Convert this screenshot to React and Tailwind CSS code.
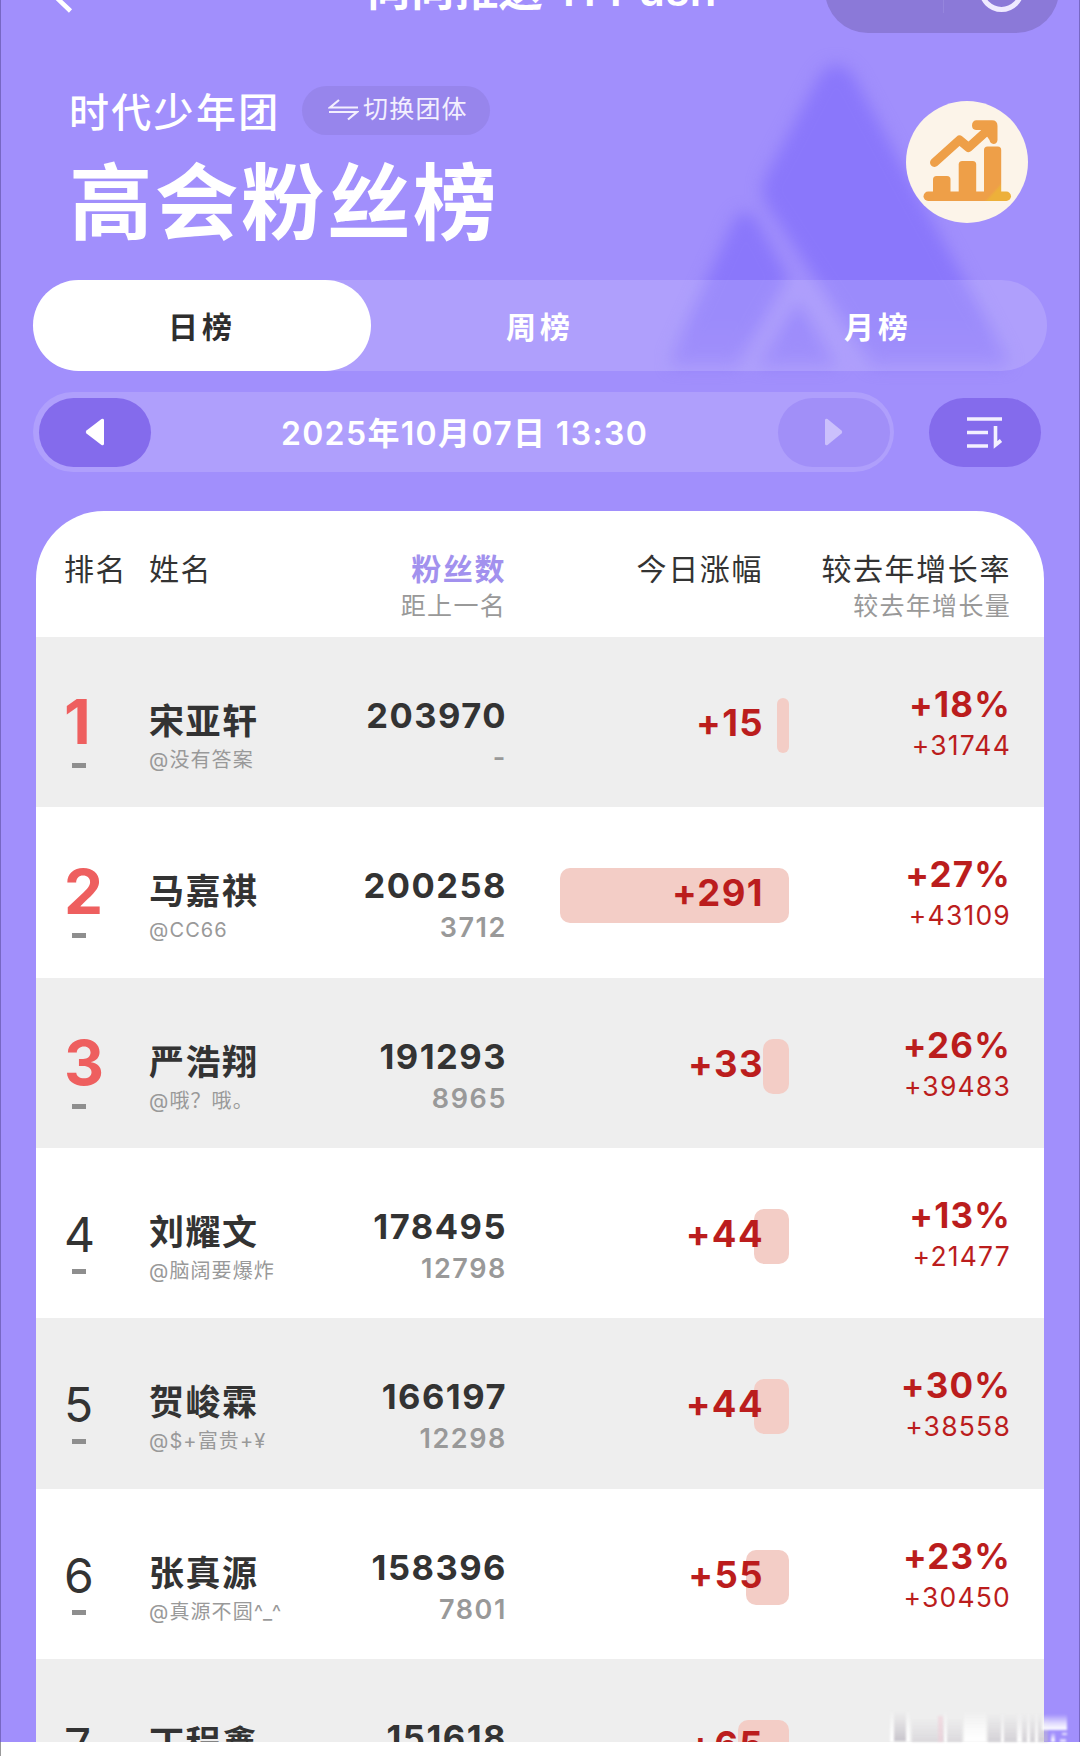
import { useState } from "react";

const TABS = ["日榜", "周榜", "月榜"];

const MEMBERS = [
  { name: "宋亚轩", handle: "@没有答案", fans: 203970, gap: "-", today: 15, rate: 18, growth: 31744 },
  { name: "马嘉祺", handle: "@CC66", fans: 200258, gap: 3712, today: 291, rate: 27, growth: 43109 },
  { name: "严浩翔", handle: "@哦？哦。", fans: 191293, gap: 8965, today: 33, rate: 26, growth: 39483 },
  { name: "刘耀文", handle: "@脑阔要爆炸", fans: 178495, gap: 12798, today: 44, rate: 13, growth: 21477 },
  { name: "贺峻霖", handle: "@$+富贵+¥", fans: 166197, gap: 12298, today: 44, rate: 30, growth: 38558 },
  { name: "张真源", handle: "@真源不圆^_^", fans: 158396, gap: 7801, today: 55, rate: 23, growth: 30450 },
  { name: "丁程鑫", fans: 151618, today: 65 },
];

const MAX_BAR = 229;

function NavBar() {
  return (
    <div className="relative h-[33px] overflow-hidden">
      <svg className="absolute left-[46px] top-0" width="30" height="16" fill="none" stroke="#fff" strokeWidth="4.5">
        <path d="M24 -31L2.500 -10L24.500 11" />
      </svg>
      <p className="absolute left-[367px] top-[-40px] whitespace-pre text-[43.500px] leading-[60px] font-semibold tracking-[0.500px] text-white">
        向向推送 TFPush
      </p>
      <div className="absolute left-[825px] top-[-53px] h-[86px] w-[234px] rounded-full bg-[#8b79d8]">
        <div className="absolute left-[118px] top-[20px] h-[46px] w-px bg-[#9585dd]" />
        <div className="absolute left-[154px] top-[20px] h-[45px] w-[45px] rounded-full border-[5px] border-[#efeaff]" />
      </div>
    </div>
  );
}

function Mountains() {
  return (
    <svg className="absolute left-[620px] top-[40px] blur-[8px]" width="440" height="350" viewBox="620 40 440 350">
      <defs>
        <linearGradient id="hill" x1="0" y1="60" x2="0" y2="385" gradientUnits="userSpaceOnUse">
          <stop offset="0" stopColor="#8a77fb" />
          <stop offset="0.8" stopColor="#8a77fb" />
          <stop offset="1" stopColor="#9480fb" />
        </linearGradient>
      </defs>
      <g fill="url(#hill)">
        <path d="M835 65Q847 65 856 82L1006 358Q1008 366 1000 366H872L764 202Q759 190 764 178L815 82Q824 65 835 65Z" />
        <path d="M744 212Q750 212 757 222L787 278L736 366H674Q668 364 671 356L732 222Q738 212 744 212Z" />
        <path d="M797 302L836 366H757Z" />
      </g>
    </svg>
  );
}

function ChartBadge() {
  return (
    <svg width="122" height="122" viewBox="0 0 122 122">
      <defs>
        <linearGradient id="gold" x1="78" y1="80" x2="100" y2="100" gradientUnits="userSpaceOnUse">
          <stop offset="0.450" stopColor="#ee9f48" />
          <stop offset="0.550" stopColor="#edb03a" />
        </linearGradient>
      </defs>
      <circle cx="61" cy="61" r="61" fill="#fcf4e9" />
      <g fill="#ee9f48">
        <rect x="27" y="75" width="17.500" height="22" rx="3.500" />
        <rect x="52.700" y="60" width="17.500" height="36" rx="3.500" />
        <rect x="78" y="45.500" width="17.200" height="50" rx="3.500" fill="url(#gold)" />
        <rect x="17.500" y="90.500" width="87.500" height="9.500" rx="4.700" fill="url(#gold)" />
        <path d="M70 19.300H86Q91.500 19.300 91.500 25V39Q91 43 87.500 43Q84 42.500 83.500 39L80 34L75 29H70Q66 28.500 66 24.500Q66 20 70 19.300Z" />
      </g>
      <path
        d="M28.500 61.500L53.500 39L62.500 46.500L83 28"
        fill="none"
        stroke="#ee9f48"
        strokeWidth="9"
        strokeLinecap="round"
        strokeLinejoin="round"
      />
    </svg>
  );
}

function Header() {
  return (
    <div className="flex h-[247px] items-start justify-between pl-[69px] pr-[52px]">
      <div>
        <div className="mt-[52px] flex h-[50px] items-center">
          <h2 className="mt-[6px] w-[233px] whitespace-nowrap text-[40px] font-medium leading-[50px] tracking-[2.300px] text-white">
            时代少年团
          </h2>
          <button className="flex h-[49px] w-[188px] items-center rounded-full bg-[#9785ec] pl-[26px] text-[25px] tracking-[1.200px] text-[#f3effe]">
            <svg width="31" height="22" fill="none" stroke="currentColor" strokeWidth="2.200">
              <path d="M11 1L2 8.500H30M1 13H29L20 20.500" />
            </svg>
            <span className="ml-1 whitespace-nowrap">切换团体</span>
          </button>
        </div>
        <h1 className="mt-[18px] whitespace-nowrap text-[83.500px] font-bold leading-[100px] tracking-[2.500px] text-white">
          高会粉丝榜
        </h1>
      </div>
      <div className="mt-[68px]">
        <ChartBadge />
      </div>
    </div>
  );
}

function TabBar({ active, onChange }) {
  return (
    <div className="ml-[33px] flex h-[91px] w-[1014px] rounded-full bg-white/15">
      {TABS.map((tab, i) => (
        <button
          key={tab}
          onClick={() => onChange(i)}
          className={`flex-1 rounded-full pt-[3px] text-[30px] font-bold tracking-[4px] ${
            active === i ? "bg-white text-[#2e2e2e]" : "text-white"
          }`}
        >
          {tab}
        </button>
      ))}
    </div>
  );
}

function DateBar() {
  return (
    <div className="mt-[21px] flex items-center pl-[33px]">
      <div className="flex h-[80px] w-[861px] items-center justify-between rounded-full bg-white/15 pl-[6px] pr-[4px]">
        <button className="flex h-[69px] w-[112px] items-center justify-center rounded-full bg-[#846bec]">
          <svg width="20" height="28" fill="#fff">
            <path d="M19 2V26Q18.500 28 16.500 27L1.500 15.500Q0 14 1.500 12.500L16.500 1Q18.500 0 19 2Z" />
          </svg>
        </button>
        <p className="mt-[3px] whitespace-nowrap text-[32px] font-semibold tracking-[1.350px] text-white">
          2025年10月07日 13:30
        </p>
        <button className="flex h-[69px] w-[112px] items-center justify-center rounded-full bg-[#a18ff8]">
          <svg width="20" height="28" fill="#cbc0fc">
            <path d="M1 2V26Q1.500 28 3.500 27L17.500 15.500Q19 14 17.500 12.500L3.500 1Q1.500 0 1 2Z" />
          </svg>
        </button>
      </div>
      <button className="ml-[35px] flex h-[69px] w-[112px] items-center justify-center rounded-full bg-[#846bec]">
        <svg width="36" height="34" fill="none" stroke="#f3f0ff" strokeWidth="3.6">
          <path d="M0 4H35M0 17.500H21M0 31H21M28.500 11V30L34 25.500" />
        </svg>
      </button>
    </div>
  );
}

function TableHead() {
  return (
    <div className="flex h-[126px] pl-[28px] pr-[33px] pt-[37px] text-[30px] leading-[42px] tracking-[1.600px] text-[#333]">
      <p className="w-[85px] whitespace-nowrap">排名</p>
      <p className="w-[120px]">姓名</p>
      <div className="w-[237px] text-right">
        <p className="font-bold text-[#a291ee]">粉丝数</p>
        <p className="text-[25px] leading-[33px] tracking-[1.300px] text-[#999]">距上一名</p>
      </div>
      <p className="w-[257px] text-right">今日涨幅</p>
      <div className="flex-1 whitespace-nowrap text-right">
        <p>较去年增长率</p>
        <p className="text-[25px] leading-[33px] tracking-[1.300px] text-[#999]">较去年增长量</p>
      </div>
    </div>
  );
}

function MemberRow({ member, rank }) {
  const barWidth = Math.round((member.today / 291) * MAX_BAR);
  const isTop = rank <= 3;

  return (
    <div className="flex h-[170.330px] shrink-0 pl-[28px] pr-[33px] odd:bg-white even:bg-[#eeeeee]">
      <div className="w-[85px]">
        {isTop ? (
          <p className="mt-[55px] text-[62px] font-bold leading-[60px] text-[#ee5f5f]">{rank}</p>
        ) : (
          <p className="mt-[57px] text-[48px] leading-[60px] text-[#333]">{rank}</p>
        )}
        <div className={`ml-[8px] h-[5px] w-[14px] bg-[#8e8e8e] ${isTop ? "mt-[11px]" : "mt-[4px]"}`} />
      </div>
      <div className="w-[130px] whitespace-nowrap pt-[62px]">
        <p className="text-[35px] font-bold leading-[44px] tracking-[1.500px] text-[#333]">{member.name}</p>
        <p className="mt-[2px] text-[20px] leading-[30px] tracking-[1.100px] text-[#999]">{member.handle}</p>
      </div>
      <div className="w-[228px] pt-[58px] text-right">
        <p className="text-[34.500px] font-bold leading-[42px] tracking-[1.500px] text-[#333]">{member.fans}</p>
        <p className="text-[27px] font-semibold leading-[41px] tracking-[1.600px] text-[#999]">{member.gap}</p>
      </div>
      {/* bar sits behind the number, both end near the same edge */}
      <div className="relative mt-[61px] h-[55px] w-[282px]">
        <div className="absolute right-0 top-0 h-full rounded-[10px] bg-[#f3cdc6]" style={{ width: barWidth }} />
        <p className="relative pr-[25px] text-right text-[36.500px] font-bold leading-[51px] tracking-[1.400px] text-[#bb1d1d]">
          +{member.today}
        </p>
      </div>
      {member.rate && (
        <div className="flex-1 pt-[46px] text-right text-[#bb1d1d]">
          <p className="text-[35px] font-bold leading-[42px] tracking-[1.200px]">+{member.rate}%</p>
          <p className="text-[26.500px] leading-[41px] tracking-[1.200px]">+{member.growth}</p>
        </div>
      )}
    </div>
  );
}

function SmearedMark() {
  return (
    <svg className="absolute left-[886px] top-[1706px] blur-[0.8px]" width="182" height="40">
      <defs>
        <linearGradient id="fade" x1="0" y1="0" x2="0" y2="1">
          <stop offset="0" stopColor="#fff" stopOpacity="0" />
          <stop offset="0.600" stopColor="#fff" stopOpacity="0.700" />
          <stop offset="1" stopColor="#fff" />
        </linearGradient>
        <linearGradient id="dusk" x1="0" y1="0" x2="0" y2="1">
          <stop offset="0" stopColor="#c9c4cc" stopOpacity="0" />
          <stop offset="1" stopColor="#c4c0c8" stopOpacity="0.900" />
        </linearGradient>
      </defs>
      <g fill="url(#dusk)">
        <rect x="8" y="6" width="12" height="29" />
        <rect x="26" y="12" width="50" height="24" opacity="0.500" />
        <rect x="102" y="8" width="60" height="28" opacity="0.700" />
      </g>
      <rect x="52" y="10" width="5" height="26" fill="#f0cfd8" opacity="0.600" />
      <g fill="url(#fade)">
        <rect x="4" y="4" width="4" height="32" />
        <rect x="20" y="4" width="4" height="32" />
        <rect x="58" y="4" width="3" height="32" />
        <rect x="78" y="4" width="22" height="32" />
        <rect x="115" y="6" width="3" height="30" />
        <rect x="131" y="6" width="5" height="30" />
        <rect x="141" y="6" width="3" height="30" />
        <rect x="149" y="6" width="3" height="30" />
        <rect x="156" y="8" width="25" height="16" />
        <rect x="165" y="26" width="4" height="10" />
        <rect x="176" y="26" width="5" height="3" />
        <rect x="174" y="32" width="6" height="4" />
      </g>
    </svg>
  );
}

export default function App() {
  const [activeTab, setActiveTab] = useState(0);

  return (
    <div className="relative h-[1756px] w-[1080px] overflow-hidden bg-white font-['Inter','Noto_Sans_CJK_SC',sans-serif]">
      <div className="relative h-[1742px] overflow-hidden border-x border-[#7767c4] bg-[#a18ffc]">
        <div className="-mx-px">
          <Mountains />
          <div className="relative">
            <NavBar />
            <Header />
            <TabBar active={activeTab} onChange={setActiveTab} />
            <DateBar />
            <div className="ml-[36px] mt-[39px] w-[1008px] overflow-hidden rounded-t-[68px] bg-white">
              <TableHead />
              {MEMBERS.map((member, i) => (
                <MemberRow key={member.name} member={member} rank={i + 1} />
              ))}
            </div>
          </div>
        </div>
      </div>
      <div className="absolute bottom-0 left-0 h-[14px] w-px bg-[#9a9a9a]" />

      {/* Watermarks */}
      <p className="pointer-events-none absolute left-[268px] top-[722px] w-[600px] -rotate-[9.500deg] whitespace-nowrap text-[42px] leading-[60px] tracking-[1px] text-black/[0.025]">
        微信公众号·鸭鸭推送TFPush
      </p>
      <p className="pointer-events-none absolute left-[268px] top-[1160px] w-[600px] -rotate-[9.500deg] whitespace-nowrap text-[42px] leading-[60px] tracking-[1px] text-black/[0.025]">
        微信公众号·鸭鸭推送TFPush
      </p>
      <SmearedMark />
    </div>
  );
}
